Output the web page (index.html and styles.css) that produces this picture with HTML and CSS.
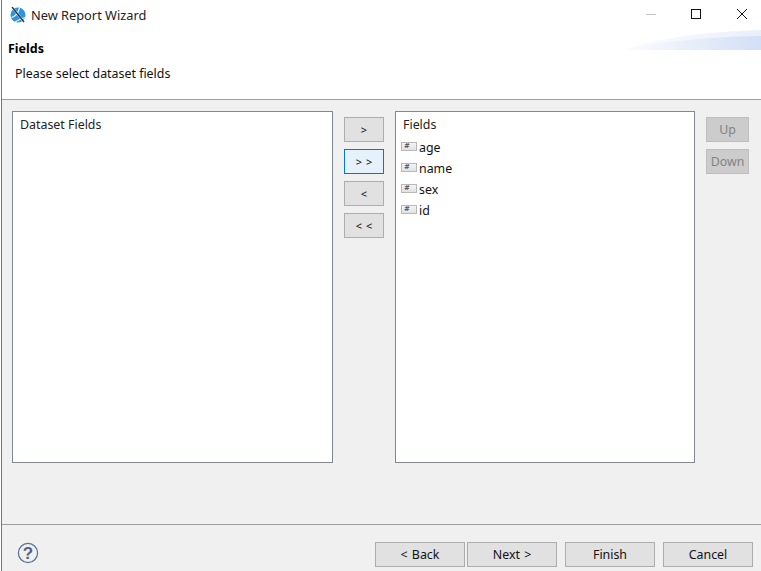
FILE: index.html
```html
<!DOCTYPE html>
<html lang="en">
<head>
<meta charset="utf-8">
<title>New Report Wizard</title>
<link rel="stylesheet" href="styles.css">
</head>
<body>
<div class="window">
  <header class="titlebar">
    <svg class="app-icon" width="16" height="16" viewBox="0 0 16 16">
      <circle cx="8" cy="8" r="7.5" fill="#2a93e2"/>
      <path d="M1.5 10.5C5 9.5 8 6.5 9.5 1" stroke="#e4f3fd" stroke-width="1.3" fill="none"/>
      <path d="M5 15C8 13.5 11 11.5 15 10.5" stroke="#e4f3fd" stroke-width="1.2" fill="none"/>
      <path d="M2 0L14 15" stroke="#fff" stroke-width="2.6" opacity=".55"/>
      <path d="M2 0L14 15" stroke="#2f3a48" stroke-width="1.5"/>
    </svg>
    <span class="title-text">New Report Wizard</span>
    <div class="win-controls">
      <svg class="win-btn" width="46" height="30" viewBox="0 0 46 30"><path d="M23 14.5H33" stroke="#c4c4c4" stroke-width="1"/></svg>
      <svg class="win-btn" width="46" height="30" viewBox="0 0 46 30"><rect x="22.5" y="9.5" width="9" height="9" fill="none" stroke="#111" stroke-width="1"/></svg>
      <svg class="win-btn" width="46" height="30" viewBox="0 0 46 30"><path d="M22 9L32 19M32 9L22 19" stroke="#111" stroke-width="1"/></svg>
    </div>
  </header>
  <section class="banner">
    <h1 class="banner-title">Fields</h1>
    <p class="banner-text">Please select dataset fields</p>
    <div class="swoosh"></div>
    <div class="swoosh swoosh-inner"></div>
  </section>
  <main class="content">
    <div class="list list-left"><div class="list-head">Dataset Fields</div></div>
    <div class="move-col">
      <button class="btn btn-move">&gt;</button>
      <button class="btn btn-move btn-focus">&gt; &gt;</button>
      <button class="btn btn-move">&lt;</button>
      <button class="btn btn-move">&lt; &lt;</button>
    </div>
    <div class="list list-right">
      <div class="list-head">Fields</div>
      <ul class="fields">
        <li class="field"><span class="col-icon">#</span>age</li>
        <li class="field"><span class="col-icon">#</span>name</li>
        <li class="field"><span class="col-icon">#</span>sex</li>
        <li class="field"><span class="col-icon">#</span>id</li>
      </ul>
    </div>
    <div class="order-col">
      <button class="btn btn-order" disabled>Up</button>
      <button class="btn btn-order" disabled>Down</button>
    </div>
  </main>
  <footer class="footer">
    <svg class="help" width="22" height="22" viewBox="0 0 22 22">
      <circle cx="11" cy="11" r="9.6" fill="none" stroke="#5a7190" stroke-width="1.2"/>
      <text x="11" y="16.8" text-anchor="middle" class="help-mark">?</text>
    </svg>
    <div class="nav">
      <div class="nav-pair">
        <button class="btn btn-nav">&lt; Back</button>
        <button class="btn btn-nav">Next &gt;</button>
      </div>
      <button class="btn btn-nav">Finish</button>
      <button class="btn btn-nav">Cancel</button>
    </div>
  </footer>
</div>
</body>
</html>
```

FILE: styles.css
```css
* { box-sizing: border-box; }
html, body { margin: 0; padding: 0; }
body {
  width: 761px;
  height: 571px;
  overflow: hidden;
  font-family: "Noto Sans", "Open Sans", sans-serif;
  font-size: 12.4px;
  color: #111;
  background: #fff;
}
.window {
  width: 760px;
  height: 571px;
  margin-left: 1px;
  display: flex;
  flex-direction: column;
  border-left: 1px solid #3a86c8;
  background: #f0f0f0;
}
.titlebar {
  height: 30px;
  display: flex;
  align-items: center;
  background: #fff;
  padding-left: 8px;
  flex: none;
}
.app-icon { flex: none; }
.title-text { margin: -1px 0 0 5px; font-size: 12.8px; color: #222; }
.win-controls { margin-left: auto; display: flex; }
.win-btn { display: block; }
.banner {
  position: relative;
  height: 70px;
  background: #fff;
  border-bottom: 1px solid #a0a0a0;
  padding-left: 6px;
  flex: none;
}
.banner-title { margin: 10px 0 0; font-size: 12.5px; line-height: 18px; font-weight: 700; color: #000; }
.banner-text { margin: 7px 0 0 7px; line-height: 18px; }
.swoosh {
  position: absolute;
  right: 0;
  top: 0;
  width: 136px;
  height: 20px;
  background: linear-gradient(90deg, #fbfcfe, #e9effb);
  clip-path: path("M0 20C30 8 80 2 136 0V20Z");
}
.swoosh-inner {
  top: 6px;
  width: 136px;
  height: 14px;
  background: linear-gradient(90deg, #fbfcfe, #d3dff6);
  clip-path: path("M0 14C30 6 80 1 136 0V14Z");
}
.content {
  flex: 1;
  display: flex;
  align-items: flex-start;
  padding: 11px 12px 0 10px;
}
.list {
  height: 352px;
  background: #fff;
  border: 1px solid #828790;
  flex: none;
}
.list-left { width: 321px; }
.list-right { width: 300px; }
.list-head { padding: 4px 0 0 7px; line-height: 18px; color: #222; }
.fields { list-style: none; margin: 3px 0 0; padding: 0 0 0 5px; }
.field { display: flex; align-items: center; height: 21px; line-height: 21px; }
.col-icon {
  width: 16px;
  height: 9px;
  margin: -3px 2px 0 0;
  background: linear-gradient(#f4f4f4, #e2e2e2);
  border: 1px solid #b8b8b8;
  font-size: 7px;
  line-height: 7px;
  padding-left: 2px;
  color: #555;
  font-family: "DejaVu Sans", sans-serif;
  font-weight: 700;
  overflow: hidden;
}
.move-col {
  width: 62px;
  flex: none;
  display: flex;
  flex-direction: column;
  align-items: center;
  gap: 7px;
  padding-top: 6px;
}
.order-col {
  flex: none;
  margin-left: 11px;
  display: flex;
  flex-direction: column;
  gap: 7px;
  padding-top: 6px;
}
.btn {
  font: inherit;
  color: #111;
  background: #e1e1e1;
  border: 1px solid #adadad;
  padding: 0;
  height: 25px;
  line-height: 22px;
  display: block;
}
.btn-move { width: 40px; font-size: 11px; word-spacing: 1px; }
.btn-focus { background: #e5f1fb; border-color: #0078d7; }
.btn-order { width: 43px; background: #cccccc; border-color: #bfbfbf; color: #838383; }
.footer {
  height: 47px;
  flex: none;
  border-top: 1px solid #a0a0a0;
  display: flex;
  padding: 17px 8px 0 15px;
  align-items: flex-start;
}
.help { flex: none; }
.help-mark { font-family: "Liberation Sans", sans-serif; font-weight: 700; font-size: 17px; fill: #47658c; }
.nav { margin-left: auto; display: flex; gap: 8px; }
.nav-pair { display: flex; gap: 2px; }
.btn-nav { width: 90px; word-spacing: 1px; }
```
